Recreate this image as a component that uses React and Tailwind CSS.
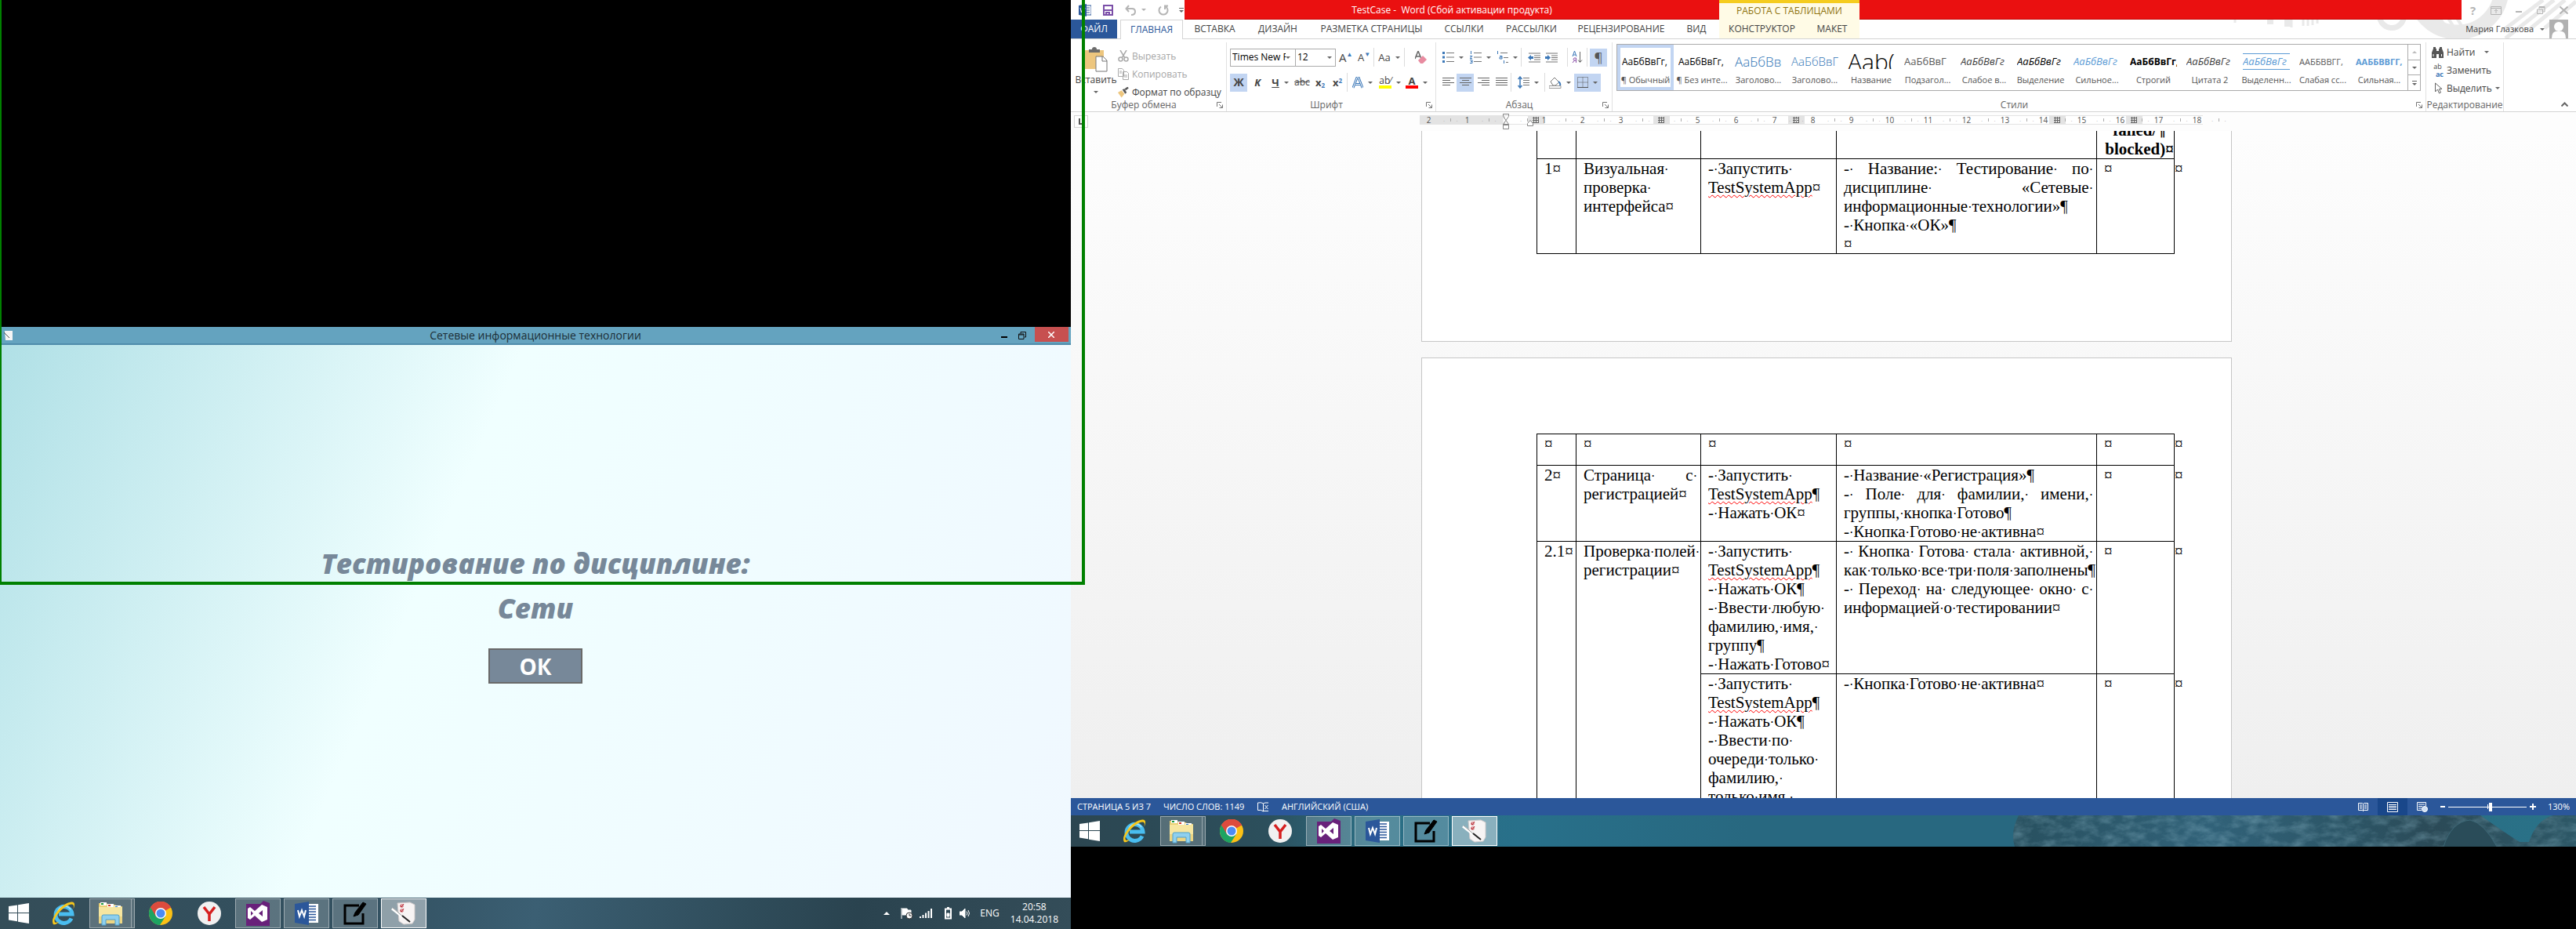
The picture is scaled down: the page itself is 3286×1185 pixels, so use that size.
import React from "react";

const caret = "inline-block border-x-[3px] border-t-[3px] border-x-transparent border-t-[#666]";
const Caret = ({ className = "" }) => <span className={`${caret} ${className}`} />;
const Sep = () => <span className="mx-px h-6 w-px bg-[#dcdcdc]" />;

/* ---------- taskbar ---------- */

const StartIcon = () => (
  <svg width="26" height="26" viewBox="0 0 26 26" fill="#fff">
    <path d="M0 4 11 2.4V12H0zM12 2.2 26 0v12H12zM0 13h11v10.2L0 21.6zM12 13h14v13l-14-2.2z" />
  </svg>
);
const IeIcon = () => (
  <svg width="32" height="32" viewBox="0 0 32 32" fill="none">
    <path d="M26 22.500A10.500 10.500 0 1 1 27 17H10" stroke="#49bdf0" strokeWidth="5" />
    <path d="M9 13a9 9 0 0 1 16-2" stroke="#a9e4fb" strokeWidth="1.500" />
    <path d="M3 30C-2 23 13 3 26 1.500c6-.5 4 6 2.500 9 1-4 .5-6-2-6C17 5 4 21 4.500 26c.3 3 4 1.500 6 .500C8 29.500 5 31 3 30z" fill="#f7c71b" />
  </svg>
);
const ExplorerIcon = () => (
  <svg width="32" height="32" viewBox="0 0 32 32">
    <path d="M1 3h10l2 2h9l1 2h8v21H1z" fill="#e9cf74" />
    <path d="M3 2h8v4H3zM12 4h8v4h-8zM21 6h8v4h-8z" fill="#fff" />
    <path d="M4 3h3v2H4z" fill="#1b9a3a" />
    <path d="M13 5h3v2h-3z" fill="#d43a2a" />
    <path d="M22 7h3v2h-3z" fill="#2a7fd4" />
    <path d="M1 8h30v21H1z" fill="#f6e6a0" />
    <path d="M1 20h30v9H1z" fill="#ecd583" />
    <path d="M5 31V20q0-2 2-2h18q2 0 2 2v11h-5v-7H10v7z" fill="#8fd0ee" stroke="#4f9fc9" />
  </svg>
);
const ChromeIcon = () => (
  <svg width="30" height="30" viewBox="0 0 30 30">
    <circle cx="15" cy="15" r="15" fill="#fbc116" />
    <path d="M15 15 2 7.500A15 15 0 0 1 28 7.500z" fill="#dd4b3e" />
    <path d="M15 15 2 7.500A15 15 0 0 0 14 30l7-11z" fill="#1da462" />
    <path d="M15 8h13.200A15 15 0 0 0 2 7.500L9 19z" fill="#dd4b3e" />
    <circle cx="15" cy="15" r="7" fill="#fff" />
    <circle cx="15" cy="15" r="5.500" fill="#4c8bf5" />
  </svg>
);
const YandexIcon = () => (
  <svg width="30" height="30" viewBox="0 0 30 30">
    <circle cx="15" cy="15" r="15" fill="#f1f1f1" />
    <path d="M8 7l7 9 7-9M15 15v10" fill="none" stroke="#d61f1f" strokeWidth="3.500" />
  </svg>
);
const VsIcon = () => (
  <svg width="32" height="32" viewBox="0 0 32 32">
    <path d="M1 4l18 0 4-4 8 3v29H1z" fill="#68217a" />
    <path d="M3 10l3-2 6 5 9-8 7 3v16l-7 3-9-8-6 5-3-2zm4 3v6l3-3zm15-1-5 4 5 4z" fill="#fff" fillRule="evenodd" />
  </svg>
);
const WordIcon = () => (
  <svg width="30" height="30" viewBox="0 0 30 30">
    <path d="M15 3h15v24H15z" fill="#fff" />
    <path d="M18 6h9M18 9.500h9M18 13h9M18 16.500h9M18 20h9M18 23.500h9" stroke="#2b579a" strokeWidth="1.500" />
    <path d="M0 3 18 0v30L0 27z" fill="#2b579a" />
    <path d="M4 11l2 8 3-8 3 8 2-8" fill="none" stroke="#fff" strokeWidth="2" />
  </svg>
);
const PenIcon = () => (
  <svg width="30" height="30" viewBox="0 0 30 30" fill="none" stroke="#000">
    <path d="M20 5H2v23h23V15" strokeWidth="3" />
    <path d="M13 19l2-5L25 1l4 2-10 14z" fill="#000" strokeWidth="1" />
  </svg>
);
const NotesIcon = () => (
  <svg width="32" height="30" viewBox="0 0 32 30">
    <path d="M8 2l16-1 6 3v19l-3 5-11 1-6-4z" fill="#f7f4f4" stroke="#d2cccc" />
    <path d="M12 4h3v3h-3zM12 10h3v3h-3z" fill="none" stroke="#c95b63" />
    <path d="M12 5l1 2 3-4M12 11l1 2 3-4" fill="none" stroke="#b5202b" />
    <path d="M1 9l14 11" stroke="#fff" strokeWidth="3" />
    <path d="M2 8l14 12" stroke="#999" />
    <path d="M14 18l10 8" stroke="#222" strokeWidth="2" />
  </svg>
);

const tasks = [
  { name: "Internet Explorer", Icon: IeIcon },
  { name: "Проводник", Icon: ExplorerIcon, open: true, stacked: true },
  { name: "Chrome", Icon: ChromeIcon },
  { name: "Yandex", Icon: YandexIcon },
  { name: "Visual Studio", Icon: VsIcon, open: true },
  { name: "Word", Icon: WordIcon, open: true },
  { name: "Редактор", Icon: PenIcon, open: true },
  { name: "Тест", Icon: NotesIcon, open: true, active: true },
];

function Taskbar({ className = "", backdrop, children }) {
  return (
    <nav className={`relative flex h-10 shrink-0 items-center overflow-hidden ${className}`}>
      {backdrop}
      <div className="relative flex h-full items-center gap-1">
        <button aria-label="Пуск" className="flex h-full w-12 items-center justify-center">
          <StartIcon />
        </button>
        {tasks.map(({ name, Icon, open, stacked, active }) => (
          <button
            key={name}
            aria-label={name}
            className={`flex h-[38px] w-[58px] items-center justify-center border ${
              active ? "border-white bg-white/45" : open ? "border-white/40 bg-white/20" : "border-transparent"
            }`}
          >
            <span className={stacked ? "flex h-full flex-1 items-center justify-center border-r border-white/40" : ""}>
              <Icon />
            </span>
            {stacked && <span className="w-[3px]" />}
          </button>
        ))}
      </div>
      {children}
    </nav>
  );
}

function Tray() {
  return (
    <div className="relative ml-auto flex items-center pr-4 text-white">
      <span className="mr-3.5 border-x-4 border-b-4 border-x-transparent border-b-white" />
      <svg className="mr-2" width="16" height="16" viewBox="0 0 16 16">
        <path d="M1 1v14M2 2h6l1 2h4v6H2z" fill="#fff" stroke="#fff" />
        <circle cx="11" cy="11" r="4" fill="#fff" stroke="#333" />
        <path d="M11 8.500V11h2.500" fill="none" stroke="#333" />
      </svg>
      <svg className="mr-4" width="16" height="14" viewBox="0 0 16 14" fill="#fff">
        <path d="M0 11h2v2H0zM3.500 9h2v4h-2zM7 6.500h2V13H7zM10.500 4h2v9h-2zM14 1h2v12h-2z" />
      </svg>
      <svg className="mr-2.5" width="9" height="16" viewBox="0 0 9 16" fill="none" stroke="#fff">
        <path d="M1 2.500h7v12H1zM3 1h3" strokeWidth="2" />
        <path d="M3 8h3v4H3z" fill="#fff" />
      </svg>
      <svg className="mr-3" width="14" height="14" viewBox="0 0 14 14" fill="none" stroke="#fff">
        <path d="M0 5h3l4-4v12L3 9H0z" fill="#fff" />
        <path d="M9 4.500q2 2.500 0 5M11 3q3 4 0 8" />
      </svg>
      <span className="mr-3.5 text-[12px]">ENG</span>
      <div className="text-center text-[12px] leading-4">
        <div>20:58</div>
        <div>14.04.2018</div>
      </div>
    </div>
  );
}

/* ---------- left display ---------- */

function TestWindow() {
  return (
    <section className="flex min-h-0 min-w-0 flex-col bg-black">
      <div className="h-[417px] shrink-0" />
      <header className="flex h-[23px] shrink-0 items-center border-b-2 border-[#4f8cab] bg-[#64a3bf]">
        <div className="w-24 pl-1">
          <svg width="14" height="14" viewBox="0 0 14 14">
            <path d="M2 1h10v12H3z" fill="#f5f5f5" />
            <path d="M1 3l7 7" stroke="#555" />
          </svg>
        </div>
        <h1 className="flex-1 text-center text-[14px] leading-5 text-[#1c2e36]">Сетевые информационные технологии</h1>
        <div className="flex h-full w-24 justify-end pr-[3px]">
          <button aria-label="Свернуть" className="flex w-6 items-center justify-center">
            <span className="mt-1 h-0.5 w-2 bg-black" />
          </button>
          <button aria-label="Восстановить" className="mr-1 flex w-6 items-center justify-center">
            <svg width="10" height="10" viewBox="0 0 10 10" fill="none" stroke="#111">
              <path d="M.5 3h6.500v6.500H.5zM3 2.500V.5h6.500V7H8M.5 4h6.500" />
            </svg>
          </button>
          <button aria-label="Закрыть" className="flex h-[19px] w-[45px] items-center justify-center bg-[#c75050] text-white">
            <svg width="8" height="8" viewBox="0 0 8 8" stroke="#fff" strokeWidth="1.500">
              <path d="M0 0l8 8M8 0l-8 8" />
            </svg>
          </button>
        </div>
      </header>
      <main className="flex min-h-0 flex-1 flex-col items-center bg-[linear-gradient(113.5deg,#b0e0e6_0%,#f0ffff_40%,#f0f8ff_100%)] pt-[250px] text-[#778899]">
        <h2 className="text-center text-[35px] leading-[57px] font-extrabold italic">
          Тестирование по дисциплине:
          <br />
          Сети
        </h2>
        <button className="mt-[23px] h-[45px] w-[120px] border-2 border-[#696969] bg-[#778899] text-[28px] leading-10 font-bold text-white">
          ОК
        </button>
      </main>
      <Taskbar className="bg-[linear-gradient(100deg,#344d58_0%,#335161_35%,#3b5f73_50%,#2f4c5a_70%,#2a434f_80%,#344d59_100%)]">
        <Tray />
      </Taskbar>
    </section>
  );
}

/* ---------- Word: title and tabs ---------- */

const tabs = [
  ["ВСТАВКА", "w-[81px]"],
  ["ДИЗАЙН", "w-[80px]"],
  ["РАЗМЕТКА СТРАНИЦЫ", "w-[159px]"],
  ["ССЫЛКИ", "w-[77px]"],
  ["РАССЫЛКИ", "w-[95px]"],
  ["РЕЦЕНЗИРОВАНИЕ", "w-[134px]"],
  ["ВИД", "w-[58px]"],
];

function TitleBar() {
  return (
    <div className="relative flex h-[25px] text-[12px]">
      <div className="flex w-[145px] items-center pl-2.5">
        <svg width="16" height="16" viewBox="0 0 16 16">
          <path d="M8 2h8v12H8z" fill="#fff" stroke="#2b579a" />
          <path d="M10 5h4M10 8h4M10 11h4" stroke="#2b579a" />
          <path d="M0 2l10-2v16L0 14z" fill="#2b579a" />
          <path d="M2 5l1.500 6L5 6l1.500 5L8 5" fill="none" stroke="#fff" />
        </svg>
        <button aria-label="Сохранить" className="ml-[15px]">
          <svg width="13" height="14" viewBox="0 0 13 14" fill="none" stroke="#7b4fa8" strokeWidth="2">
            <path d="M1 1h11v12H1zM1 7h11M4 13v-3h4v3" />
          </svg>
        </button>
        <button aria-label="Отменить" className="ml-[15px] flex items-center gap-1.5">
          <svg width="15" height="14" viewBox="0 0 15 14" fill="none" stroke="#b5b5b5" strokeWidth="2">
            <path d="M5 1 1.500 5 5 9M2 5h7q4 0 4 4t-5 4" />
          </svg>
          <Caret className="opacity-50" />
        </button>
        <button aria-label="Повторить" className="ml-[15px]">
          <svg width="14" height="14" viewBox="0 0 14 14" fill="none" stroke="#b5b5b5" strokeWidth="2">
            <path d="M9 2a5.500 5.500 0 1 1-5 .5M9 6V1.500h4" />
          </svg>
        </button>
        <button aria-label="Настройка панели" className="ml-[13px] flex flex-col items-center gap-0.5">
          <span className="h-px w-1.5 bg-[#666]" />
          <Caret />
        </button>
      </div>
      <div className="w-[682px] border-b border-[#c00808] bg-[#ea1010] text-center leading-[26px] whitespace-pre text-white">
        {"TestCase -  Word (Сбой активации продукта)"}
      </div>
      <div className="w-[179px] border-t-4 border-[#f5cc1f] bg-[#fffbe6] text-center leading-[19px] text-[#8f7410]">
        РАБОТА С ТАБЛИЦАМИ
      </div>
      <div className="flex-1 border-b border-[#c00808] bg-[#ea1010]" />
      <div className="flex w-[146px] items-center justify-between pr-2.5 pl-[11px] text-[#b4b4b4]">
        <button aria-label="Справка" className="text-[15px] leading-4 font-bold">?</button>
        <button aria-label="Параметры ленты">
          <svg width="14" height="12" viewBox="0 0 14 12" fill="none" stroke="#b4b4b4">
            <path d="M.5 1.500h13v10H.5zM.5 3.500h13M7 10V5M5 7l2-2 2 2" />
          </svg>
        </button>
        <button aria-label="Свернуть"><span className="mt-1 block h-0.5 w-2 bg-[#b4b4b4]" /></button>
        <button aria-label="Восстановить">
          <svg width="11" height="10" viewBox="0 0 11 10" fill="none" stroke="#b4b4b4">
            <path d="M.5 4h7v5.500h-7zM3 3.500v-3h7V7H8M3 1.500h7" />
          </svg>
        </button>
        <button aria-label="Закрыть">
          <svg width="11" height="10" viewBox="0 0 11 10" stroke="#b4b4b4" strokeWidth="2">
            <path d="M.5.5l10 9M10.500.5l-10 9" />
          </svg>
        </button>
      </div>
    </div>
  );
}

function Decoration() {
  return (
    <svg className="absolute top-0 right-0" width="466" height="49" viewBox="0 0 466 49" fill="none" stroke="#e9e9e9">
      <circle cx="231" cy="20" r="15.500" strokeWidth="7" />
      <circle cx="315" cy="-15" r="56" strokeWidth="19" />
      <path d="M264 0l40 48M276 0l32 46M288 0l27 42M300 0l22 36" strokeWidth="4" />
      <path d="M424 0l-50 38M438 0l-62 49M452 0l-46 38M466 2l-40 34" strokeWidth="5" />
      <path d="M31 25v4M103 25v10M118 25v8M124 25v8M130 25v7M136 25v5" strokeWidth="3" />
      <path d="M76 25v6M98 25v9" strokeWidth="8" />
    </svg>
  );
}

function Tabs() {
  return (
    <div role="tablist" className="relative flex h-6 items-center text-[12px] leading-6 text-[#444]">
      <button role="tab" className="w-[59px] bg-[#2b579a] text-white">ФАЙЛ</button>
      <button role="tab" aria-selected="true" className="z-10 ml-1 h-[25px] w-20 border border-b-0 border-[#d4d4d4] bg-white text-[#2b579a]">
        ГЛАВНАЯ
      </button>
      {tabs.map(([label, w]) => (
        <button role="tab" key={label} className={`${w} whitespace-nowrap`}>
          {label}
        </button>
      ))}
      <button role="tab" className="w-[109px] bg-[#fffbe6]">КОНСТРУКТОР</button>
      <button role="tab" className="w-[70px] bg-[#fffbe6]">МАКЕТ</button>
      <div className="ml-auto flex h-full items-center pr-2.5">
        <button className="flex items-center gap-2 text-[11px]">
          Мария Глазкова <Caret />
        </button>
        <svg className="ml-1.5" width="24" height="24" viewBox="0 0 24 24">
          <path d="M0 0h24v24H0z" fill="#b1b1b1" />
          <circle cx="12" cy="9" r="6" fill="#fff" />
          <path d="M3 24q0-8 5-9h8q5 1 5 9z" fill="#fff" />
        </svg>
      </div>
    </div>
  );
}

/* ---------- Word: ribbon ---------- */

function Group({ title, className = "", launcher = true, children }) {
  return (
    <section className={`flex h-[88px] shrink-0 flex-col border-r border-[#e1e1e1] ${className}`}>
      <div className="min-h-0 flex-1">{children}</div>
      <div className="flex h-4 items-center text-[12px] leading-4 text-[#666]">
        <span className="flex-1 text-center">{title}</span>
        {launcher && (
          <button aria-label={`${title}: параметры`} className="mr-1">
            <svg width="8" height="8" viewBox="0 0 8 8" fill="none" stroke="#777">
              <path d="M.5 6V.5H6M3 3l4 4M7.500 3.500v4h-4" />
            </svg>
          </button>
        )}
      </div>
    </section>
  );
}

const Tool = ({ label, w = "w-[22px]", on, caretOn, children }) => (
  <button
    aria-label={label}
    className={`flex h-[23px] shrink-0 items-center justify-center gap-1.5 text-[13px] leading-5 text-[#444] ${w} ${on ? "bg-[#c2d5f2]" : ""}`}
  >
    {children}
    {caretOn && <Caret />}
  </button>
);

const Lines = ({ d, width = 15 }) => (
  <svg width={width} height="14" viewBox={`0 0 ${width} 14`} fill="none" stroke="#666">
    <path d={d} />
  </svg>
);

const ListIcon = ({ kind }) => (
  <svg width="15" height="16" viewBox="0 0 15 16" fill="none">
    {kind === "dots" && <path d="M0 1h3v3H0zM0 6.500h3v3H0zM0 12h3v3H0z" fill="#3c78b8" />}
    {kind === "nums" && <path d="M1.500 0v4M0 6.500h3L0 9.500h3M0 11.500h3v4H0M1 13.500h2" stroke="#3c78b8" />}
    {kind === "multi" && <path d="M1.500 0v4M4 6.500h3v3.500H4v-2h3M9.500 12v4" stroke="#3c78b8" />}
    <path
      d={kind === "multi" ? "M5 2.500h9M9 8.500h6M12 14.500h3" : "M5 2.500h10M5 8h10M5 13.500h10"}
      stroke="#777"
    />
  </svg>
);

const IndentIcon = ({ out }) => (
  <svg width="17" height="13" viewBox="0 0 17 13" fill="none">
    <path d="M1 1h15M8 4h8M8 6.500h8M8 9h8M1 12h15" stroke="#777" />
    <path d={out ? "M0 6.500l4-3.500v2h3v3H4v2z" : "M7 6.500L3 3v2H0v3h3v2z"} fill="#3c78b8" />
  </svg>
);

function Clipboard() {
  return (
    <Group title="Буфер обмена" className="w-[199px]">
      <div className="flex pt-1.5">
        <button className="flex w-[60px] flex-col items-center pl-1 text-[12px] leading-4 text-[#444]">
          <svg width="29" height="32" viewBox="0 0 29 32">
            <path d="M0 4h24v24H0z" fill="#edc67e" />
            <path d="M5 7V3h4q0-3 3-3t3 3h4v4z" fill="#6b6b6b" />
            <path d="M14 12h9l5 5v14H14z" fill="#fff" stroke="#777" />
            <path d="M22 12v6h6" fill="none" stroke="#777" />
          </svg>
          <span className="mt-0.5">Вставить</span>
          <Caret className="mt-1.5" />
        </button>
        <div className="flex flex-col text-[12px] leading-[23px] whitespace-nowrap">
          <button className="flex h-[23px] items-center gap-1 text-[#a6a6a6]">
            <svg width="14" height="15" viewBox="0 0 14 15" fill="none" stroke="#aaa" strokeWidth="1.500">
              <path d="M3 0l6 10M11 0L5 10" />
              <circle cx="3.500" cy="11.500" r="2.500" />
              <circle cx="10.500" cy="11.500" r="2.500" />
            </svg>
            Вырезать
          </button>
          <button className="flex h-[23px] items-center gap-1 text-[#a6a6a6]">
            <svg width="14" height="15" viewBox="0 0 14 15" fill="#fff" stroke="#aaa">
              <path d="M.5.5h5l2 2v8h-7zM6.500 4.500h5l2 2v8h-7z" />
              <path d="M2 4h3M2 6h3M8 9h4M8 11h4" />
            </svg>
            Копировать
          </button>
          <button className="flex h-[23px] items-center gap-1 text-[#444]">
            <svg width="14" height="14" viewBox="0 0 15 14">
              <path d="M0 7l5-3 4 5-4 5z" fill="#edc67e" />
              <path d="M6 3l3-1 3 5-2 2z" fill="#555" />
              <path d="M10 3l4-3" stroke="#555" strokeWidth="2.500" />
            </svg>
            Формат по образцу
          </button>
        </div>
      </div>
    </Group>
  );
}

function FontGroup() {
  return (
    <Group title="Шрифт" className="w-[267px]">
      <div className="flex items-center pt-[7px] pl-1">
        <div className="flex h-[23px] w-[85px] items-center border border-[#ababab] pr-1.5">
          <input aria-label="Шрифт" defaultValue="Times New Roman" className="w-[70px] pl-0.5 text-[12px] leading-4 text-black" />
          <Caret className="ml-auto" />
        </div>
        <div className="flex h-[23px] w-[55px] items-center border border-l-0 border-[#ababab] pr-1">
          <input aria-label="Размер шрифта" defaultValue="12" className="w-9 pl-0.5 text-[12px] leading-4 text-black" />
          <Caret className="ml-auto" />
        </div>
        <Tool label="Увеличить размер" w="w-[25px]"><span className="text-[15px]">A</span><sup className="-ml-1.5 text-[8px] text-[#3c78b8]">▲</sup></Tool>
        <Tool label="Уменьшить размер"><span>A</span><sup className="-ml-1.5 text-[8px] text-[#3c78b8]">▼</sup></Tool>
        <Sep />
        <Tool label="Регистр" w="w-9" caretOn>Aa</Tool>
        <Sep />
        <Tool label="Очистить формат" w="w-[38px]">
          <svg width="15" height="17" viewBox="0 0 15 17">
            <path d="M0 10L4 0l4 10M1.500 7h5" fill="none" stroke="#666" strokeWidth="1.500" />
            <path d="M4 12l6-6 5 5-5 5H7z" fill="#e88ba0" />
          </svg>
        </Tool>
      </div>
      <div className="flex items-center pt-2 pl-1">
        <Tool label="Полужирный" on><b className="text-[14px]">Ж</b></Tool>
        <Tool label="Курсив" w="w-[26px]"><b className="italic">К</b></Tool>
        <Tool label="Подчеркнутый" w="w-[32px]" caretOn><b className="underline">Ч</b></Tool>
        <Tool label="Зачеркнутый" w="w-[24px]"><span className="text-[12px] line-through">abc</span></Tool>
        <Tool label="Подстрочный"><b>x<sub className="text-[8px] text-[#3c78b8]">2</sub></b></Tool>
        <Tool label="Надстрочный"><b>x<sup className="text-[8px] text-[#3c78b8]">2</sup></b></Tool>
        <Sep />
        <Tool label="Эффекты" w="w-9" caretOn>
          <svg width="14" height="15" viewBox="0 0 14 15" fill="none">
            <path d="M1 14L6 1h2l5 13M4 9.500h6" stroke="#3c78b8" strokeWidth="3" />
            <path d="M1 14L6 1h2l5 13M4 9.500h6" stroke="#fff" />
          </svg>
        </Tool>
        <Tool label="Выделение цветом" w="w-[34px]" caretOn>
          <span className="border-b-4 border-[#ffff00] text-[12px] leading-3">ab⁄</span>
        </Tool>
        <Tool label="Цвет текста" w="w-[34px]" caretOn>
          <b className="w-4 border-b-4 border-[#ff0000] text-center text-[13px] leading-3">A</b>
        </Tool>
      </div>
    </Group>
  );
}

function ParagraphGroup() {
  return (
    <Group title="Абзац" className="w-[225px]">
      <div className="flex items-center pt-[7px] pl-1">
        <Tool label="Маркеры" w="w-[35px]" caretOn><ListIcon kind="dots" /></Tool>
        <Tool label="Нумерация" w="w-[34px]" caretOn><ListIcon kind="nums" /></Tool>
        <Tool label="Многоуровневый" w="w-[34px]" caretOn><ListIcon kind="multi" /></Tool>
        <Sep />
        <span className="w-1" />
        <Tool label="Уменьшить отступ"><IndentIcon out /></Tool>
        <Tool label="Увеличить отступ"><IndentIcon /></Tool>
        <span className="w-2" />
        <Sep />
        <Tool label="Сортировка">
          <svg width="14" height="16" viewBox="0 0 14 16" fill="none">
            <path d="M1 7l2.500-7L6 7M2 5h3" stroke="#3c78b8" />
            <path d="M5.500 15V9H3q-2 1.500 0 3h2.500M3.500 12L1 15" stroke="#8a4fa8" />
            <path d="M10.500 1v13M8 11.500l2.500 3 2.500-3" stroke="#666" />
          </svg>
        </Tool>
        <Sep />
        <span className="w-0.5" />
        <Tool label="Знаки абзаца" on><span className="text-[17px] text-[#555]">¶</span></Tool>
      </div>
      <div className="flex items-center pt-2 pl-1">
        <Tool label="По левому краю"><Lines d="M0 1.500h15M0 4.500h10M0 7.500h15M0 10.500h10" /></Tool>
        <Tool label="По центру" on><Lines d="M0 1.500h15M3 4.500h9M0 7.500h15M3 10.500h9" /></Tool>
        <Tool label="По правому краю" w="w-[24px]"><Lines d="M0 1.500h15M5 4.500h10M0 7.500h15M5 10.500h10" /></Tool>
        <Tool label="По ширине"><Lines d="M0 1.500h15M0 4.500h15M0 7.500h15M0 10.500h15" /></Tool>
        <Sep />
        <span className="w-1" />
        <Tool label="Интервал" w="w-8" caretOn>
          <svg width="15" height="16" viewBox="0 0 15 16" fill="none">
            <path d="M3 1v14M.5 4L3 1l2.500 3M.5 12L3 15l2.500-3" stroke="#3c78b8" strokeWidth="1.500" />
            <path d="M7 2.500h8M7 5.500h8M7 8.500h8M7 11.500h8" stroke="#777" />
          </svg>
        </Tool>
        <span className="w-1" />
        <Sep />
        <Tool label="Заливка" w="w-[36px]" caretOn>
          <svg width="16" height="15" viewBox="0 0 16 15" fill="none">
            <path d="M2 6l5-5 6 6-5 4H5z" fill="#fff" stroke="#777" />
            <path d="M12 6q3 2 2 5" stroke="#3c78b8" strokeWidth="2" />
            <path d="M0 11.500h15v3H0z" fill="#fff" stroke="#999" />
          </svg>
        </Tool>
        <Tool label="Границы" w="w-[34px]" on caretOn>
          <svg width="14" height="14" viewBox="0 0 14 14" fill="none" stroke="#555">
            <path d="M.5.500h13v13H.5zM7 .5v13M.5 7h13" strokeDasharray="1 1" />
            <path d="M0 13.500h14" />
          </svg>
        </Tool>
      </div>
    </Group>
  );
}

const styles = [
  ["АаБбВвГг,", "¶ Обычный", "text-[12px] text-black", true],
  ["АаБбВвГг,", "¶ Без инте...", "text-[12px] text-black"],
  ["АаБбВв", "Заголово...", "text-[17px] font-light text-[#2e74b5]"],
  ["АаБбВвГ", "Заголово...", "text-[15px] font-light text-[#2e74b5]"],
  ["Ааb(", "Название", "text-[30px] font-light text-black"],
  ["АаБбВвГ", "Подзагол...", "text-[13px] text-[#5a5a5a]"],
  ["АаБбВвГг", "Слабое в...", "text-[13px] italic text-[#404040]"],
  ["АаБбВвГг", "Выделение", "text-[13px] italic text-black"],
  ["АаБбВвГг", "Сильное...", "text-[13px] italic text-[#5b9bd5]"],
  ["АаБбВвГг,", "Строгий", "text-[12px] font-bold text-black"],
  ["АаБбВвГг", "Цитата 2", "text-[13px] italic text-[#404040]"],
  ["АаБбВвГг", "Выделенн...", "border-y border-[#5b9bd5] text-[13px] italic text-[#5b9bd5]"],
  ["ААББВВГГ,", "Слабая сс...", "text-[11px] text-[#5a5a5a]"],
  ["ААББВВГГ,", "Сильная...", "text-[11px] font-bold text-[#5b9bd5]"],
];

function StylesGroup() {
  return (
    <Group title="Стили" className="w-[1038px]">
      <div className="pt-0.5 pl-[5px]">
        <div className="flex h-[60px] w-[1026px] border border-[#ababab]">
          {styles.map(([sample, name, look, on], i) => (
            <button key={i} className={`flex w-[72px] shrink-0 flex-col items-center ${on ? "border-4 border-[#c2d5f2]" : "border-4 border-transparent"}`}>
              <span className="flex h-[35px] w-[60px] items-center overflow-hidden">
                <span className={`w-full overflow-hidden text-left leading-[19px] whitespace-nowrap ${look}`}>{sample}</span>
              </span>
              <span className="text-[11px] leading-3 whitespace-nowrap text-[#555]">{name}</span>
            </button>
          ))}
          <div className="flex flex-1 flex-col divide-y divide-[#ababab] border-l border-[#ababab]">
            <button aria-label="Вверх" className="flex flex-1 items-center justify-center">
              <span className="border-x-[3px] border-b-[3px] border-x-transparent border-b-[#bbb]" />
            </button>
            <button aria-label="Вниз" className="flex flex-1 items-center justify-center"><Caret /></button>
            <button aria-label="Все стили" className="flex flex-1 flex-col items-center justify-center gap-0.5">
              <span className="h-px w-1.5 bg-[#666]" />
              <Caret />
            </button>
          </div>
        </div>
      </div>
    </Group>
  );
}

function EditGroup() {
  return (
    <Group title="Редактирование" launcher={false} className="w-[99px]">
      <div className="flex flex-col pt-px pl-[7px] text-[12px] leading-[23px] text-[#444]">
        <button className="flex h-[23px] items-center gap-1">
          <svg width="15" height="14" viewBox="0 0 15 14" fill="#555">
            <path d="M2 0h3v2h1v3h3V2h1V0h3v2l2 5v7H9V9H6v5H0V7l2-5z" />
            <path d="M2 9v3M12.500 9v3" stroke="#fff" />
          </svg>
          Найти <Caret className="ml-2" />
        </button>
        <button className="flex h-[23px] items-center gap-1">
          <span className="flex w-[15px] flex-col text-[9px] leading-[10px]">
            <span>ab</span>
            <b className="self-end text-[#3c78b8]">ac</b>
          </span>
          Заменить
        </button>
        <button className="flex h-[23px] items-center gap-1">
          <svg width="15" height="15" viewBox="0 0 15 15" fill="#fff" stroke="#666">
            <path d="M4.500 1v11l3-3 2 5 2-1-2-4.500h3.500z" />
          </svg>
          Выделить <Caret />
        </button>
      </div>
    </Group>
  );
}

/* ---------- Word: document ---------- */

const rulerMarks = ["2", "1", "", "1", "2", "3", "", "5", "6", "7", "8", "9", "10", "11", "12", "13", "14", "15", "16", "17", "18"];

const ColumnMark = ({ className }) => (
  <span className={`absolute top-0 flex h-full w-[21px] items-center justify-center bg-[#e3e3e3] ${className}`}>
    <svg width="8" height="8" viewBox="0 0 8 8" stroke="#666" fill="none">
      <path d="M1.500 0v8M4.500 0v8M7.500 0v8M0 1.500h8M0 4.500h8M0 7.500h8" />
    </svg>
  </span>
);

function Ruler() {
  return (
    <div className="flex h-[25px] shrink-0 items-center border-t border-[#d4d4d4] bg-[#fdfdfd]">
      <div className="ml-1 flex h-4 w-[18px] items-center justify-center border border-[#d4d4d4] bg-white">
        <span className="h-2 w-1.5 border-b-2 border-l-2 border-[#555]" />
      </div>
      <div className="flex flex-1 justify-center pr-[54px] pb-1">
        <div className="relative flex h-3 w-[999px] border-y border-[#e3e3e3] bg-white text-[10px] leading-[11px] text-[#555]">
          <span className="absolute inset-y-0 left-0 w-[109px] bg-[#e3e3e3]" />
          <ColumnMark className="left-[138px]" />
          <ColumnMark className="left-[298px]" />
          <ColumnMark className="left-[470px]" />
          <ColumnMark className="left-[803px]" />
          <ColumnMark className="left-[901px]" />
          <svg className="absolute -top-1 left-[101px]" width="56" height="24" viewBox="0 0 56 24" fill="#fff" stroke="#888">
            <path d="M5.500 1.500h7v3l-3.500 5 3.500 5h-7M12.500 1.500h-7v3L9 9.500l-3.500 5v1h7v-1M5.500 15.500h7v5h-7zM36.500 16.500v-3l3.500-4 3.500 4v3z" />
          </svg>
          {rulerMarks.map((mark, i) => (
            <span key={i} className="relative flex w-[49px] shrink-0 items-center justify-between text-[#aaa]">
              <span className="w-6 text-center text-[#555]">{mark}</span>
              <span className="text-[8px]">·</span>
              <span className="h-1 w-px bg-[#aaa]" />
              <span className="text-[8px]">·</span>
            </span>
          ))}
        </div>
      </div>
    </div>
  );
}

/* Text with the visible space marks drawn at the width of a space. */
const Marked = ({ text }) =>
  text.split(/(·)/).map((part, i) =>
    part === "·" ? (
      <span key={i} className="text-[16px] leading-4">
        ·
      </span>
    ) : part === "TestSystemApp" || part.startsWith("TestSystemApp") ? (
      <React.Fragment key={i}>
        <span className="underline decoration-[#ff0000] decoration-wavy decoration-1 underline-offset-2">TestSystemApp</span>
        {part.slice(13)}
      </React.Fragment>
    ) : (
      part
    )
  );

/* A leading "=" spreads the words over the full width of the cell. */
const Line = ({ children }) =>
  children.startsWith("=") ? (
    <div className="flex justify-between whitespace-nowrap">
      {children.slice(1).split(" ").map((word, i) => (
        <span key={i}>
          <Marked text={word} />
        </span>
      ))}
    </div>
  ) : (
    <div className="whitespace-nowrap">
      <Marked text={children} />
    </div>
  );

const Cell = ({ lines, rowSpan, className = "" }) => (
  <td rowSpan={rowSpan} className={`border border-black pr-1 pl-[9px] align-top ${className}`}>
    {lines.map((line, i) => (
      <Line key={i}>{line}</Line>
    ))}
  </td>
);

const RowEnd = () => <td className="align-top">¤</td>;

const Columns = () => (
  <colgroup>
    <col className="w-[50px]" />
    <col className="w-[159px]" />
    <col className="w-[173px]" />
    <col className="w-[332px]" />
    <col className="w-[99px]" />
    <col className="w-5" />
  </colgroup>
);

const launch = ["-·Запустить·", "TestSystemApp¶", "-·Нажать·ОК¶"];

function Pages() {
  const table = "w-[833px] table-fixed border-collapse text-[21px] leading-6 text-black";
  return (
    <div className="flex min-h-0 flex-1 flex-col items-center gap-5 overflow-hidden bg-linear-to-b from-[#fdfdfd] to-[#efefef] pl-2 font-['Liberation_Serif',serif]">
      <article className="h-[269px] w-[1034px] shrink-0 overflow-hidden border border-t-0 border-[#c6c6c6] bg-white pl-[146px]">
        <table className={`${table} -mt-3.5`}>
          <Columns />
          <tbody>
            <tr>
              <td className="border border-black" />
              <td className="border border-black" />
              <td className="border border-black" />
              <td className="border border-black" />
              <td className="border border-black pl-2.5 text-center font-bold whitespace-nowrap">
                <div>failed/¶</div>
                <div>blocked)¤</div>
              </td>
              <td />
            </tr>
            <tr>
              <Cell lines={["1¤"]} />
              <Cell lines={["Визуальная·", "проверка·", "интерфейса¤"]} />
              <Cell lines={["-·Запустить·", "TestSystemApp¤"]} />
              <Cell lines={["=-· Название:· Тестирование· по·", "=дисциплине· «Сетевые·", "информационные·технологии»¶", "-·Кнопка·«ОК»¶", "¤"]} />
              <Cell lines={["¤"]} />
              <RowEnd />
            </tr>
          </tbody>
        </table>
      </article>
      <article className="h-[1300px] w-[1034px] shrink-0 border border-[#c6c6c6] bg-white pt-24 pl-[146px]">
        <table className={table}>
          <Columns />
          <tbody>
            <tr className="h-10">
              <Cell lines={["¤"]} />
              <Cell lines={["¤"]} />
              <Cell lines={["¤"]} />
              <Cell lines={["¤"]} />
              <Cell lines={["¤"]} />
              <RowEnd />
            </tr>
            <tr>
              <Cell lines={["2¤"]} />
              <Cell lines={["=Страница· с·", "регистрацией¤"]} />
              <Cell lines={["-·Запустить·", "TestSystemApp¶", "-·Нажать·ОК¤"]} />
              <Cell lines={["-·Название·«Регистрация»¶", "=-· Поле· для· фамилии,· имени,·", "группы,·кнопка·Готово¶", "-·Кнопка·Готово·не·активна¤"]} />
              <Cell lines={["¤"]} />
              <RowEnd />
            </tr>
            <tr>
              <Cell rowSpan={2} lines={["2.1¤"]} />
              <Cell rowSpan={2} lines={["Проверка·полей·", "регистрации¤"]} />
              <Cell lines={[...launch, "-·Ввести·любую·", "фамилию,·имя,·", "группу¶", "-·Нажать·Готово¤"]} />
              <Cell lines={["=-· Кнопка· Готова· стала· активной,·", "как·только·все·три·поля·заполнены¶", "=-· Переход· на· следующее· окно· с·", "информацией·о·тестировании¤"]} />
              <Cell lines={["¤"]} />
              <RowEnd />
            </tr>
            <tr className="h-[500px]">
              <Cell lines={[...launch, "-·Ввести·по·", "очереди·только·", "фамилию,·", "только·имя,·"]} />
              <Cell lines={["-·Кнопка·Готово·не·активна¤"]} />
              <Cell lines={["¤"]} />
              <RowEnd />
            </tr>
          </tbody>
        </table>
      </article>
    </div>
  );
}

function StatusBar() {
  return (
    <footer className="flex h-[22px] shrink-0 items-center bg-[#2b579a] pr-2 pl-2 text-[11px] whitespace-nowrap text-white">
      <span className="w-[110px]">СТРАНИЦА 5 ИЗ 7</span>
      <span className="w-[120px]">ЧИСЛО СЛОВ: 1149</span>
      <svg className="mr-4" width="15" height="13" viewBox="0 0 15 13" fill="none" stroke="#fff">
        <path d="M7.500 12V2Q5 0 .5 1v9.500q4.500-1 7 1.500M7.500 2Q9 .5 14 1M9.500 4l4 5M13.500 4l-4 5M8 11.500h6" />
      </svg>
      <span>АНГЛИЙСКИЙ (США)</span>
      <div className="ml-auto flex h-full items-center">
        <button aria-label="Режим чтения" className="flex h-full w-[38px] items-center justify-center">
          <svg width="13" height="13" viewBox="0 0 13 13" fill="none" stroke="#fff">
            <path d="M.5 1.500h5l1 1 1-1h5v9h-5l-1 1-1-1h-5zM6.500 2v10M2 4h3M2 6h3M2 8h3M8 4h3M8 6h3M8 8h3" />
          </svg>
        </button>
        <button aria-label="Разметка страницы" className="flex h-full w-[38px] items-center justify-center bg-[#19478a]">
          <svg width="14" height="13" viewBox="0 0 14 13" fill="none" stroke="#fff">
            <path d="M.5.500h13v12H.5zM2 3.500h10M2 5.500h10M2 7.500h10M2 9.500h10" />
          </svg>
        </button>
        <button aria-label="Веб-документ" className="flex h-full w-[38px] items-center justify-center">
          <svg width="14" height="13" viewBox="0 0 14 13" fill="none" stroke="#fff">
            <path d="M6 10.500H.5v-10h11V5M2 3h8M2 5.500h5M2 8h4" />
            <circle cx="10" cy="9" r="3.500" fill="#cfe0f5" />
          </svg>
        </button>
        <button aria-label="Уменьшить" className="ml-1 h-0.5 w-1.5 bg-white" />
        <div className="relative mx-1 flex h-full w-[100px] items-center">
          <span className="absolute left-[50px] h-1.5 w-px bg-white" />
          <input
            type="range"
            aria-label="Масштаб"
            min="0"
            max="100"
            defaultValue="54"
            className="h-px w-full appearance-none bg-white [&::-webkit-slider-thumb]:h-[11px] [&::-webkit-slider-thumb]:w-1 [&::-webkit-slider-thumb]:appearance-none [&::-webkit-slider-thumb]:bg-white"
          />
        </div>
        <button aria-label="Увеличить">
          <svg width="8" height="8" viewBox="0 0 8 8" stroke="#fff" strokeWidth="2">
            <path d="M0 4h8M4 0v8" />
          </svg>
        </button>
        <span className="ml-[15px]">130%</span>
      </div>
    </footer>
  );
}

const Rocks = () => (
  <svg className="absolute inset-y-0 right-0" width="719" height="40" viewBox="0 0 719 40">
    <defs>
      <linearGradient id="rock" x1="0" x2="1">
        <stop offset="0" stopColor="#28505f" />
        <stop offset=".35" stopColor="#316279" />
        <stop offset=".6" stopColor="#2c5566" />
        <stop offset=".75" stopColor="#2b4a57" />
        <stop offset="1" stopColor="#2d5867" />
      </linearGradient>
      <filter id="grain" x="0" y="0" width="1" height="1">
        <feTurbulence type="fractalNoise" baseFrequency=".05 .09" numOctaves="5" seed="4" />
        <feColorMatrix values="0 0 0 0 .28  0 0 0 0 .5  0 0 0 0 .6  0 1.200 0 0 -.45" />
        <feComposite in2="SourceGraphic" operator="in" />
      </filter>
    </defs>
    <path d="M8 0Q-3 22 3 40H719V0H690q-22 6-31 34h-12Q628 22 597 0z" fill="url(#rock)" />
    <path d="M8 0Q-3 22 3 40H719V0H690q-22 6-31 34h-12Q628 22 597 0z" filter="url(#grain)" opacity=".6" />
    <path d="M550 40q10-32 34-34 18 4 34 34" fill="#2a4c59" stroke="#3d6877" />
  </svg>
);

function WordDisplay() {
  return (
    <section className="flex min-h-0 min-w-0 flex-col bg-black">
      <header className="relative shrink-0 border-b border-[#d4d4d4] bg-white">
        <Decoration />
        <TitleBar />
        <Tabs />
      </header>
      <div className="flex h-[92px] shrink-0 items-start bg-white pt-1">
        <Clipboard />
        <FontGroup />
        <ParagraphGroup />
        <StylesGroup />
        <EditGroup />
        <button aria-label="Свернуть ленту" className="mt-[76px] mr-2.5 ml-auto">
          <svg width="9" height="6" viewBox="0 0 9 6" fill="none" stroke="#666" strokeWidth="2">
            <path d="M.5 5.500l4-4 4 4" />
          </svg>
        </button>
      </div>
      <Ruler />
      <Pages />
      <StatusBar />
      <Taskbar
        className="bg-[linear-gradient(90deg,#2c4651_0%,#2c4f5c_13%,#2b6e84_20%,#28708a_30%,#286880_45%,#286880_75%,#2a7288_100%)]"
        backdrop={<Rocks />}
      />
      <div className="h-[105px] shrink-0" />
    </section>
  );
}

export default function App() {
  return (
    <div className="relative grid h-screen grid-cols-[1366fr_1920fr] grid-rows-[minmax(0,1fr)] overflow-hidden bg-black font-['Open_Sans','Noto_Sans',sans-serif]">
      <TestWindow />
      <WordDisplay />
      <div className="pointer-events-none absolute top-0 left-0 h-[746px] w-[1384px] border-r-4 border-b-4 border-l-2 border-[#008000]" />
    </div>
  );
}
